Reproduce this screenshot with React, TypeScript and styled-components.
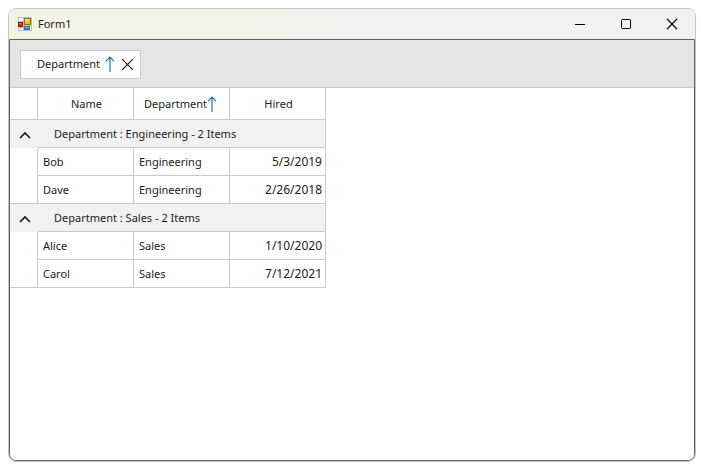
import React, { useState } from "react";
import styled, { createGlobalStyle } from "styled-components";

const line = "#cacaca";

const GlobalStyle = createGlobalStyle`
  * { box-sizing: border-box; }
  body {
    margin: 0;
    background: #fff;
    color: #1b1b1b;
    font-family: "Noto Sans", "Segoe UI", sans-serif;
    font-size: 11px;
    line-height: 16px;
  }
  button {
    font: inherit;
    color: inherit;
    background: none;
    border: 0;
    padding: 0;
  }
`;

const Desktop = styled.div`
  display: flex;
  min-height: 100vh;
  padding: 8px 5px 2px 8px;
`;

const Window = styled.main`
  flex: 1;
  display: flex;
  flex-direction: column;
  border: 1px solid #c6c6c6;
  border-radius: 8px;
  overflow: hidden;
`;

const TitleBar = styled.header`
  display: flex;
  align-items: center;
  height: 30px;
  padding-left: 9px;
  background: linear-gradient(90deg, #f3f4e6, #f3f3ea 30%, #f3f1f3 60%);
`;

const Title = styled.h1`
  flex: 1;
  margin: 0 0 0 6px;
  font-size: 11px;
  font-weight: 400;
  line-height: 16px;
`;

const CaptionButton = styled.button`
  display: grid;
  place-items: center;
  width: 46px;
  height: 28px;
  color: #000;
`;

const Client = styled.section`
  flex: 1;
  background: #fff;
  border: 1px solid #606060;
  border-radius: 0 0 7px 7px;
`;

const GroupPanel = styled.div`
  display: flex;
  height: 48px;
  padding: 10px;
  background: #e5e5e5;
  border-bottom: 1px solid ${line};
`;

const GroupChip = styled.div`
  display: flex;
  align-items: center;
  height: 29px;
  padding: 0 6px 1px 16px;
  background: #fff;
  border: 1px solid ${line};
`;

const ChipSort = styled.button`
  display: flex;
  align-items: center;
  gap: 5px;
`;

const ChipRemove = styled.button`
  display: grid;
  margin-left: 6px;
`;

const Grid = styled.table`
  table-layout: fixed;
  width: 316px;
  border-collapse: separate;
  border-spacing: 0;
`;

const IndentCol = styled.col`
  width: 28px;
`;

const HeaderCell = styled.th`
  height: 32px;
  padding: 0;
  font-weight: 400;
  border: solid ${line};
  border-width: 0 1px 1px 0;
`;

const HeaderButton = styled.button<{ $sorted?: boolean }>`
  display: flex;
  align-items: center;
  justify-content: center;
  width: 100%;
  height: 31px;
  padding: ${(p) => (p.$sorted ? "0 2px 0 0" : "0 0 0 2px")};
`;

const GroupCell = styled.th<{ $toggle?: boolean }>`
  height: 28px;
  padding: ${(p) => (p.$toggle ? "0" : "0 0 0 16px")};
  background: #f1f1f1;
  font-weight: 400;
  text-align: left;
  border: solid ${line};
  border-width: ${(p) => (p.$toggle ? "0" : "0 1px 1px 0")};
`;

const ToggleButton = styled.button`
  display: grid;
  place-items: center;
  width: 29px;
  height: 28px;
  padding-top: 2px;
`;

const IndentCell = styled.td<{ $last?: boolean }>`
  height: 28px;
  padding: 0;
  border: solid ${line};
  border-width: 0 1px ${(p) => (p.$last ? "1px" : "0")} 0;
`;

const Cell = styled.td<{ $end?: boolean }>`
  height: 28px;
  padding: ${(p) => (p.$end ? "0 3px 0 5px" : "0 5px")};
  font-size: ${(p) => (p.$end ? "12px" : "11px")};
  text-align: ${(p) => (p.$end ? "right" : "left")};
  border: solid ${line};
  border-width: 0 1px 1px 0;
`;

const FormIcon = () => (
  <svg width="14" height="14" viewBox="0 0 14 14" shapeRendering="crispEdges" aria-hidden="true">
    <path fill="#bdbdbd" d="M0 0h14v14H0z" />
    <path fill="#fff" d="M1 1h4v3H1zM1 11h4v2H1zM12 9h1v4h-1z" />
    <path fill="#8c1a10" d="M0 5h5v5H0z" />
    <path fill="#c93422" d="M1 6h3v3H1z" />
    <path fill="#e8816a" d="M1 6h2v1H1z" />
    <path fill="#9a6d09" d="M6 1h7v7H6z" />
    <path fill="#f5bd22" d="M7 2h5v5H7z" />
    <path fill="#ffe58a" d="M7 2h4v1H7zM7 3h2v2H7z" />
    <path fill="#3a6fc8" d="M6 9h6v4H6z" />
    <path fill="#82b4f5" d="M7 10h4v1H7z" />
  </svg>
);

const SortArrow = () => (
  <svg width="10" height="16" viewBox="0 0 10 16" fill="none" stroke="#1c6fc4" strokeWidth="1.2" aria-hidden="true">
    <path d="M5 16V1M1 5.2L5 1l4 4.2" />
  </svg>
);

const Chevron = ({ open }: { open: boolean }) => (
  <svg width="12" height="8" viewBox="0 0 12 8" fill="none" stroke="#1b1b1b" strokeWidth="1.6" aria-hidden="true">
    <path d={open ? "M1 7L6 2l5 5" : "M1 1l5 5 5-5"} />
  </svg>
);

const Cross = ({ size }: { size: number }) => (
  <svg width={size} height={size} viewBox="0 0 12 12" fill="none" stroke="currentColor" strokeWidth="1.1" aria-hidden="true">
    <path d="M1 1l10 10M11 1L1 11" />
  </svg>
);

const groups = [
  {
    name: "Engineering",
    people: [
      { name: "Bob", hired: "5/3/2019" },
      { name: "Dave", hired: "2/26/2018" },
    ],
  },
  {
    name: "Sales",
    people: [
      { name: "Alice", hired: "1/10/2020" },
      { name: "Carol", hired: "7/12/2021" },
    ],
  },
];

export default function App() {
  const [closed, setClosed] = useState<string[]>([]);
  const toggle = (name: string) =>
    setClosed((c) => (c.includes(name) ? c.filter((n) => n !== name) : [...c, name]));

  return (
    <>
      <GlobalStyle />
      <Desktop>
        <Window>
          <TitleBar>
            <FormIcon />
            <Title>Form1</Title>
            <CaptionButton aria-label="Minimize">
              <svg width="10" height="10" viewBox="0 0 10 10" aria-hidden="true">
                <path d="M0 5h10v1H0z" />
              </svg>
            </CaptionButton>
            <CaptionButton aria-label="Maximize">
              <svg width="10" height="10" viewBox="0 0 10 10" fill="none" stroke="#000" aria-hidden="true">
                <rect x="0.5" y="0.5" width="9" height="9" rx="1" />
              </svg>
            </CaptionButton>
            <CaptionButton aria-label="Close">
              <Cross size={12} />
            </CaptionButton>
          </TitleBar>
          <Client>
            <GroupPanel>
              <GroupChip>
                <ChipSort>
                  Department
                  <SortArrow />
                </ChipSort>
                <ChipRemove aria-label="Remove grouping by Department">
                  <Cross size={13} />
                </ChipRemove>
              </GroupChip>
            </GroupPanel>
            <Grid>
              <colgroup>
                <IndentCol />
                <col />
                <col />
                <col />
              </colgroup>
              <thead>
                <tr>
                  <HeaderCell />
                  <HeaderCell scope="col"><HeaderButton>Name</HeaderButton></HeaderCell>
                  <HeaderCell scope="col" aria-sort="ascending">
                    <HeaderButton $sorted>Department<SortArrow /></HeaderButton>
                  </HeaderCell>
                  <HeaderCell scope="col"><HeaderButton>Hired</HeaderButton></HeaderCell>
                </tr>
              </thead>
              {groups.map((g) => {
                const open = !closed.includes(g.name);
                return (
                  <tbody key={g.name}>
                    <tr>
                      <GroupCell $toggle>
                        <ToggleButton
                          aria-label={`Toggle ${g.name}`}
                          aria-expanded={open}
                          onClick={() => toggle(g.name)}
                        >
                          <Chevron open={open} />
                        </ToggleButton>
                      </GroupCell>
                      <GroupCell colSpan={3} scope="rowgroup">
                        {`Department : ${g.name} - ${g.people.length} Items`}
                      </GroupCell>
                    </tr>
                    {open &&
                      g.people.map((p, i) => (
                        <tr key={p.name}>
                          <IndentCell $last={i === g.people.length - 1} />
                          <Cell>{p.name}</Cell>
                          <Cell>{g.name}</Cell>
                          <Cell $end>{p.hired}</Cell>
                        </tr>
                      ))}
                  </tbody>
                );
              })}
            </Grid>
          </Client>
        </Window>
      </Desktop>
    </>
  );
}
